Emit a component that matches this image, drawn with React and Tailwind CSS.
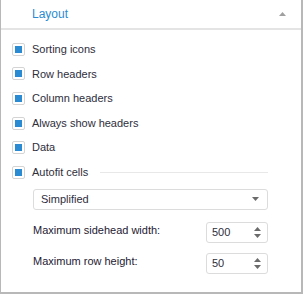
import React from 'react';

const options = [
  'Sorting icons',
  'Row headers',
  'Column headers',
  'Always show headers',
  'Data',
];

function Check({ label }) {
  return (
    <div className="flex items-center h-[24.6px]">
      <div className="w-[13px] h-[13px] rounded-[2px] border border-[#d4d4d4] bg-white flex items-center justify-center">
        <div className="w-[7px] h-[7px] bg-[#2a8bd2]" />
      </div>
      <span className="ml-[7px] text-[#2e2e3c]">{label}</span>
    </div>
  );
}

function Spin({ value }) {
  return (
    <div className="w-[62px] h-[21px] border border-[#dcdcdc] rounded-[3px] flex items-center pl-[5px] pr-[6px] bg-white">
      <span className="flex-1 text-[#2e2e3c]">{value}</span>
      <div className="flex flex-col gap-[3px]">
        <svg width="7" height="4" viewBox="0 0 7 4"><path d="M3.5 0L7 4H0z" fill="#6b6b6b" /></svg>
        <svg width="7" height="4" viewBox="0 0 7 4"><path d="M0 0H7L3.5 4z" fill="#6b6b6b" /></svg>
      </div>
    </div>
  );
}

export default function App() {
  return (
    <div
      className="w-[303px] h-[294px] bg-white border-l border-r-2 border-b-2 border-[#b8b8b8] text-[11px] overflow-hidden"
      style={{ fontFamily: '"Liberation Sans", Arial, sans-serif' }}
    >
      <div className="h-[30px] border-b-2 border-[#e4e4e4] flex items-center pl-[31px] pr-[15px]">
        <span className="flex-1 text-[#2a8bd2] text-[12px]">Layout</span>
        <svg width="7" height="4" viewBox="0 0 7 4"><path d="M3.5 0L7 4H0z" fill="#a0a0a0" /></svg>
      </div>
      <div className="pt-[7px] pl-[11px] pr-[33px]">
        {options.map((o) => (
          <Check key={o} label={o} />
        ))}
        <div className="flex items-center">
          <Check label="Autofit cells" />
          <div className="flex-1 ml-[12px] h-px bg-[#e8e8e8]" />
        </div>
        <div className="pl-[21px] mt-[4px]">
          <div className="h-[21px] border border-[#dcdcdc] rounded-[3px] flex items-center pl-[7px] pr-[8px]">
            <span className="flex-1 text-[#2e2e3c]">Simplified</span>
            <svg width="7" height="4" viewBox="0 0 7 4"><path d="M0 0H7L3.5 4z" fill="#6b6b6b" /></svg>
          </div>
          <div className="flex items-center justify-between mt-[12px]">
            <span className="text-[#1e2033] -mt-[3px]">Maximum sidehead width:</span>
            <Spin value="500" />
          </div>
          <div className="flex items-center justify-between mt-[10px]">
            <span className="text-[#1e2033] -mt-[3px]">Maximum row height:</span>
            <Spin value="50" />
          </div>
        </div>
      </div>
    </div>
  );
}
